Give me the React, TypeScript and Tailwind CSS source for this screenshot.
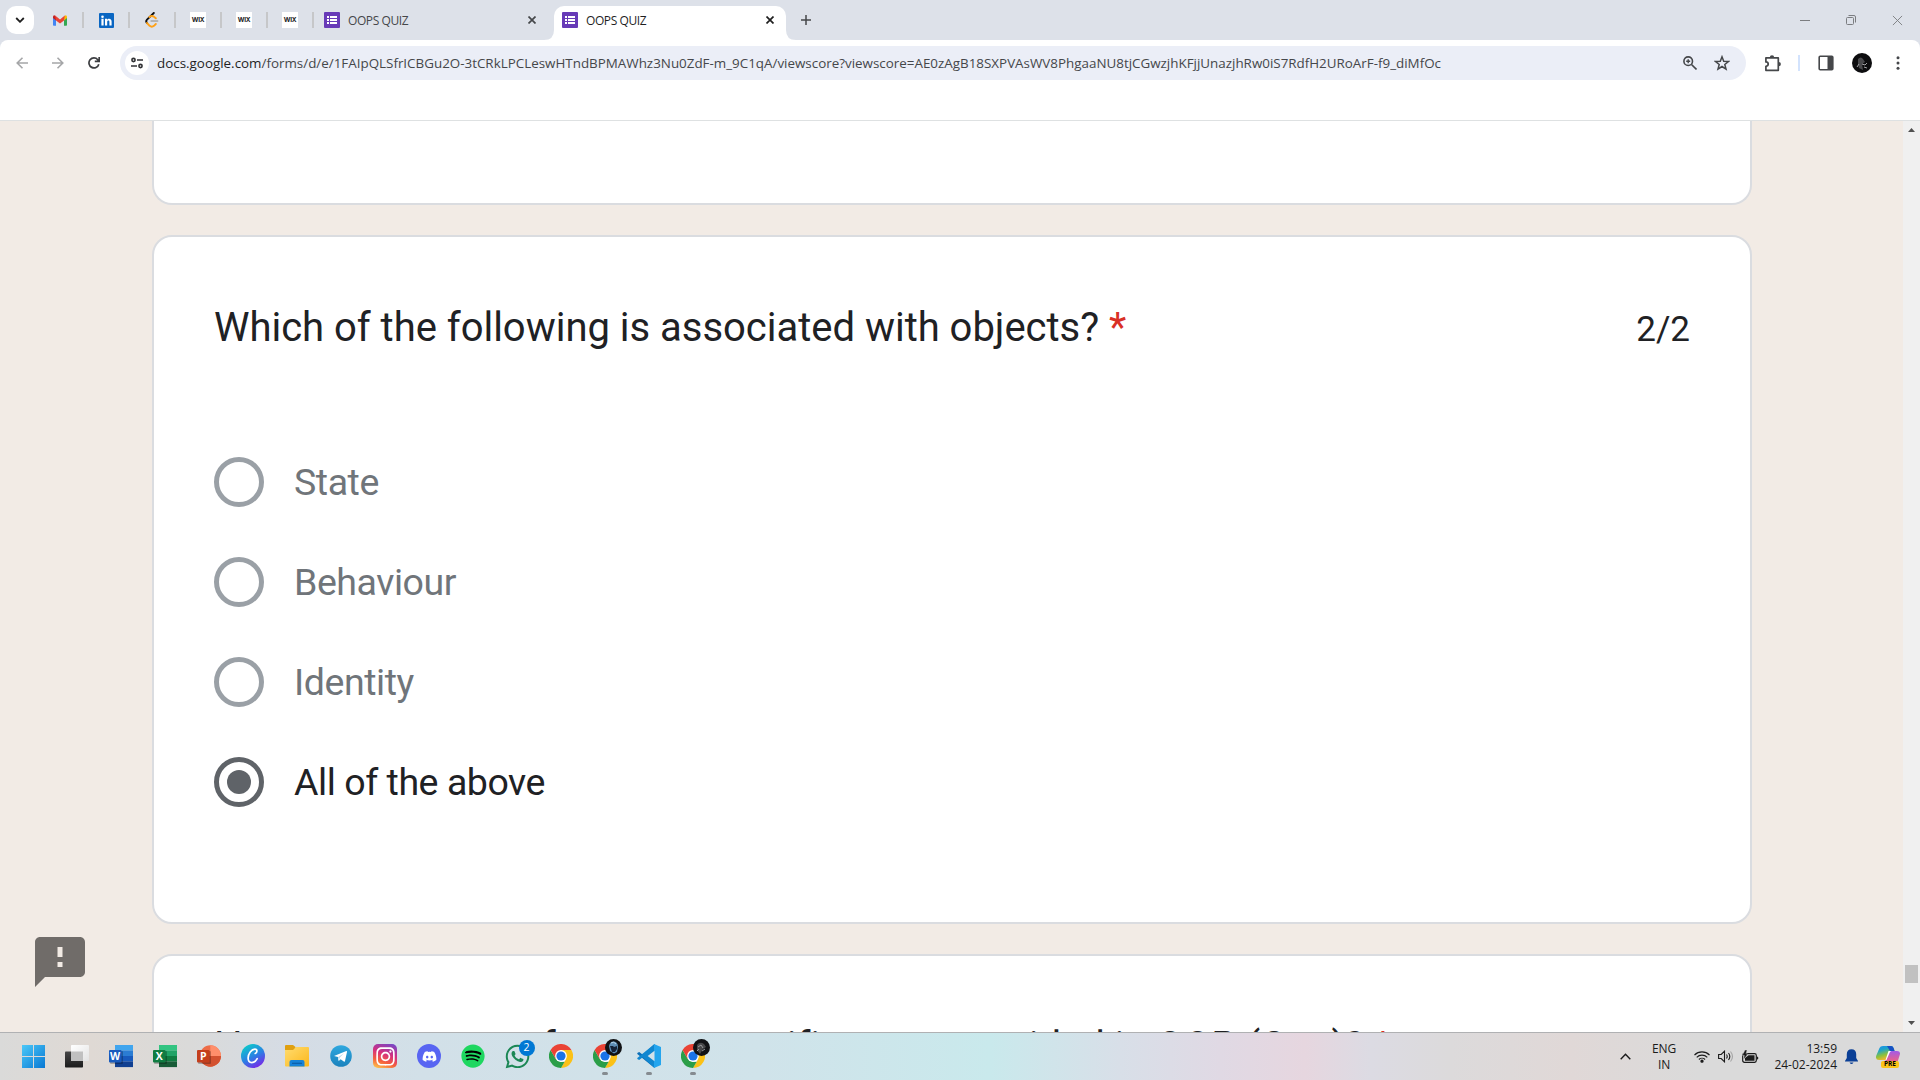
import React from "react";
import { FaDiscord, FaInstagram, FaSpotify, FaWhatsapp } from "react-icons/fa";
import { MdFeedback } from "react-icons/md";

const ui = "font-['Open_Sans','Noto_Sans',sans-serif]";

/* ---------- favicons ---------- */

const Gmail = () => (
  <svg width="14" height="11" viewBox="0 0 14 11">
    <path d="M0 1.6V10q0 .7.8.7H3V4.2z" fill="#4285f4" />
    <path d="M14 1.6V10q0 .7-.8.7H11V4.2z" fill="#34a853" />
    <path d="M0 1.8V3l3 2.6V1.6L2.3.7Q.3-.6 0 1.8z" fill="#c5221f" />
    <path d="M14 1.8V3l-3 2.6V1.6l.7-.9q2-1.3 2.3 1.1z" fill="#fbbc04" />
    <path d="M2.2.6 7 4.4 11.8.6 11 5.6 7 8.6 3 5.6z" fill="#ea4335" />
  </svg>
);

const LinkedIn = () => (
  <svg width="15" height="15" viewBox="0 0 15 15">
    <rect width="15" height="15" rx="1" fill="#0a66c2" />
    <circle cx="3.5" cy="3.7" r="1.3" fill="#fff" />
    <path d="M2.4 5.8h2.2v6.8H2.4zM6 5.8h2.1v1c.9-1.6 4.5-1.8 4.5 1.8v4h-2.2V9c0-2-2.2-1.8-2.2 0v3.6H6z" fill="#fff" />
  </svg>
);

const LeetCode = () => (
  <svg width="14" height="16" viewBox="0 0 14 16" fill="none" strokeLinecap="round" strokeWidth="1.9">
    <path d="M8.8 1 2 7.6q-1.6 1.6 0 3.4" stroke="#111" />
    <path d="m2 11 2.6 2.8q2.2 1.8 4.4 0L10.8 12M4.4 5q2.6-1.9 4.6-.2l1.8 1.5" stroke="#ffa116" />
    <path d="M6.3 9h6.2" stroke="#b3b3b3" />
  </svg>
);

const Wix = () => (
  <span className="flex h-4 w-4 items-center justify-center bg-white font-['Inter',sans-serif] text-[6.5px] font-bold leading-none tracking-[-0.3px] text-[#222222]">
    WIX
  </span>
);

const FormsIcon = () => (
  <svg width="16" height="16" viewBox="0 0 16 16" className="shrink-0">
    <rect width="16" height="16" rx="1" fill="#673ab7" />
    <path d="M3 4h2v2H3zM3 7h2v2H3zM3 10h2v2H3zM6 4h7v2H6zM6 7h7v2H6zM6 10h7v2H6z" fill="#fff" />
  </svg>
);

const CloseX = ({ color }: { color: string }) => (
  <svg width="8" height="8" viewBox="0 0 8 8" stroke={color} strokeWidth="1.7">
    <path d="m.5.5 7 7M7.5.5l-7 7" />
  </svg>
);

const PinnedTab = ({ children }: { children: React.ReactNode }) => (
  <div className="flex h-4 w-[46px] items-center justify-center border-r-2 border-[#c6c7c9]">{children}</div>
);

const TabStrip = () => (
  <div className="flex h-10 shrink-0 items-center bg-[#dde1e9] pl-1.5">
    <button className="flex h-7 w-7 items-center justify-center rounded-[10px] bg-white">
      <svg width="10" height="6" viewBox="0 0 10 6" fill="none" stroke="#1f1f1f" strokeWidth="1.8">
        <path d="m1.2 1 3.8 3.8L8.8 1" />
      </svg>
    </button>
    <div className="ml-1 flex">
      <PinnedTab><Gmail /></PinnedTab>
      <PinnedTab><LinkedIn /></PinnedTab>
      <PinnedTab><LeetCode /></PinnedTab>
      <PinnedTab><Wix /></PinnedTab>
      <PinnedTab><Wix /></PinnedTab>
      <PinnedTab><Wix /></PinnedTab>
    </div>
    <div className="flex h-10 w-[240px] items-center pl-[10px] pr-[18px]">
      <FormsIcon />
      <span className={`${ui} ml-2 flex-1 pt-px text-[12px] tracking-[-0.4px] text-[#45474a]`}>OOPS QUIZ</span>
      <CloseX color="#45474a" />
    </div>
    <div className="relative flex h-[34px] w-[232px] items-center self-end rounded-t-[10px] bg-white pb-1.5 pl-2 pr-3">
      <svg className="absolute -left-[10px] bottom-0" width="10" height="10"><path d="M10 0v10H0Q10 10 10 0z" fill="#fff" /></svg>
      <svg className="absolute -right-[10px] bottom-0" width="10" height="10"><path d="M0 0v10h10Q0 10 0 0z" fill="#fff" /></svg>
      <FormsIcon />
      <span className={`${ui} ml-2 flex-1 pt-px text-[12px] tracking-[-0.4px] text-[#1f1f1f]`}>OOPS QUIZ</span>
      <CloseX color="#1f1f1f" />
    </div>
    <svg className="ml-[15px]" width="10" height="10" stroke="#45474a" strokeWidth="1.5"><path d="M0 5h10M5 0v10" /></svg>
    <div className="ml-auto flex items-center gap-[36px] pr-[17px]">
      <svg width="10" height="11" stroke="#7b7d80"><path d="M0 5.5h10" /></svg>
      <svg width="10" height="10" viewBox="0 0 10 10" fill="none" stroke="#7b7d80"><rect x=".5" y="2.5" width="7" height="7" rx="1" /><path d="M2.5.5H8q1.5 0 1.5 1.5v5.500" /></svg>
      <svg width="11" height="11" viewBox="0 0 12 11" stroke="#7b7d80"><path d="m1 .5 10 10M11 .5l-10 10" /></svg>
    </div>
  </div>
);

const Avatar = () => (
  <svg width="20" height="20" viewBox="0 0 20 20">
    <circle cx="10" cy="10" r="10" fill="#0d0d0f" />
    <path d="M6 6q3-3 5 0l2 3-3 2 1 6-4-2-1-4z" fill="#4a4a4d" />
    <path d="m10 11 3 1 2-2M12 14l3 1M5 14l2-3" stroke="#a5a5a8" fill="none" />
  </svg>
);

const Toolbar = () => (
  <div className="h-20 shrink-0 bg-[#dde1e9]">
    <div className="flex h-20 items-start rounded-t-[8px] bg-white pt-1.5">
      <div className="flex h-[34px] w-[120px] shrink-0 items-center pl-4">
        <svg width="12" height="12" viewBox="0 0 12 12" fill="none" stroke="#a5a6a8" strokeWidth="1.6"><path d="M12 6H1.200M6.500.7 1.200 6l5.300 5.300" /></svg>
        <svg className="ml-6" width="12" height="12" viewBox="0 0 12 12" fill="none" stroke="#a5a6a8" strokeWidth="1.600"><path d="M0 6h10.800M5.500.7 10.800 6l-5.300 5.300" /></svg>
        <svg className="ml-6" width="12" height="12" viewBox="0 0 12 12" fill="none" stroke="#3c3e41" strokeWidth="1.700"><path d="M10.800 7.200A5 5 0 1 1 9.800 2.700L11 4M11.200 0v4.400H6.800" /></svg>
      </div>
      <div className="flex h-[34px] w-[1626px] shrink-0 items-center rounded-full bg-[#ebeef7] pl-[5px] pr-4">
        <span className="flex h-6 w-6 shrink-0 items-center justify-center rounded-full bg-white">
          <svg width="12" height="12" viewBox="0 0 12 12" fill="none" stroke="#303134" strokeWidth="1.600"><circle cx="2.500" cy="3" r="1.600" /><path d="M6 3h6M0 9h6" /><circle cx="9.500" cy="9" r="1.600" /></svg>
        </span>
        <span className={`${ui} ml-2 flex-1 whitespace-nowrap pt-px text-[13.4px] text-[#45474a]`}>
          <span className="text-[#1f1f1f]">docs.google.com</span>/forms/d/e/1FAIpQLSfrICBGu2O-3tCRkLPCLeswHTndBPMAWhz3Nu0ZdF-m_9C1qA/viewscore?viewscore=AE0zAgB18SXPVAsWV8PhgaaNU8tjCGwzjhKFjjUnazjhRw0iS7RdfH2URoArF-f9_diMfOc
        </span>
        <svg width="14" height="14" viewBox="0 0 14 14" fill="none" stroke="#45474a" strokeWidth="1.600"><circle cx="5.200" cy="5.200" r="4.300" /><path d="m8.500 8.500 5 5" /><path d="M5.200 3.200v4M3.200 5.200h4" strokeWidth="1.400" /></svg>
        <svg className="ml-[17px]" width="16" height="16" viewBox="0 0 16 16" fill="none" stroke="#45474a" strokeWidth="1.500"><path d="m8 1.800 1.700 4.400 4.700.3-3.600 3 1.200 4.600-4-2.600-4 2.600 1.200-4.600-3.600-3 4.700-.3z" /></svg>
      </div>
      <div className="flex h-[34px] flex-1 items-center pl-[18px]">
        <svg width="18" height="17" viewBox="0 0 18 17" fill="none" stroke="#45474a" strokeWidth="1.700"><path d="M1.900 2.900h12.400v12.400H1.900v-4q2.300 0 2.300-2.200T1.900 6.900z" strokeLinejoin="round" /><path d="M5.800 2.500a2.200 2.200 0 0 1 4.400 0zM14.700 6.900a2.200 2.200 0 0 1 0 4.400z" fill="#45474a" stroke="none" /></svg>
        <span className="ml-4 h-4 w-0.5 bg-[#d3e3fd]" />
        <svg className="ml-[18px]" width="16" height="16" viewBox="0 0 16 16"><rect x="1.200" y="1.200" width="13.600" height="13.600" rx="1" fill="none" stroke="#45474a" strokeWidth="1.600" /><path d="M9.500 1H15v14H9.500z" fill="#45474a" /></svg>
        <span className="ml-[18px]"><Avatar /></span>
        <svg className="ml-6" width="4" height="14" fill="#45474a"><circle cx="2" cy="1.700" r="1.500" /><circle cx="2" cy="7" r="1.500" /><circle cx="2" cy="12.300" r="1.500" /></svg>
      </div>
    </div>
  </div>
);

/* ---------- form ---------- */

const options = [
  { label: "State", selected: false },
  { label: "Behaviour", selected: false },
  { label: "Identity", selected: false },
  { label: "All of the above", selected: true },
];

const Question = ({ text, score }: { text: string; score?: string }) => (
  <div className="flex h-[60px] items-baseline justify-between whitespace-nowrap text-[40px] leading-[60px] tracking-[-0.02px] text-[#202124]">
    <span>
      {text}
      <span className="ml-[10px] text-[#d93025]">*</span>
    </span>
    {score && <span className="text-[35px]">{score}</span>}
  </div>
);

const FormPage = () => (
  <div className="relative flex-1 overflow-hidden bg-[#f2ebe5] pl-[152px] font-[Roboto,sans-serif]">
    <div className="flex w-[1600px] flex-col gap-[30px]">
      <div className="h-[84px] rounded-b-[20px] border-2 border-t-0 border-[#dadce0] bg-white" />
      <div className="h-[689px] rounded-[20px] border-2 border-[#dadce0] bg-white px-[60px] pt-[61px]">
        <Question text="Which of the following is associated with objects?" score="2/2" />
        <div className="mt-[99px] flex flex-col gap-[50px]">
          {options.map((o) => (
            <div key={o.label} className="flex h-[50px] items-center gap-[30px]">
              <span className={o.selected ? "flex h-[50px] w-[50px] items-center justify-center rounded-full border-[5px] border-[#5f6368]" : "h-[50px] w-[50px] rounded-full border-[5px] border-[#9aa0a6]"}>
                {o.selected && <span className="h-[24px] w-[24px] rounded-full bg-[#5f6368]" />}
              </span>
              <span className={o.selected ? "text-[37.5px] leading-[50px] tracking-[-0.45px] text-[#202124]" : "text-[37.5px] leading-[50px] tracking-[-0.45px] text-[#70757a]"}>{o.label}</span>
            </div>
          ))}
        </div>
      </div>
      <div className="h-[400px] rounded-[20px] border-2 border-[#dadce0] bg-white px-[60px] pt-[61px]">
        <Question text="How many types of access specifiers are provided in OOP (C++)?" />
      </div>
    </div>
    <MdFeedback className="absolute bottom-[40px] left-[30px] h-[60px] w-[60px] text-[#706c69]" />
  </div>
);

const ScrollBar = () => (
  <div className="flex w-[17px] shrink-0 flex-col items-center bg-[#f0f0f0]">
    <svg className="mt-[7px]" width="7" height="4"><path d="M0 4 3.500 0 7 4z" fill="#505050" /></svg>
    <div className="mt-[833px] h-[18px] w-[13px] bg-[#c1c1c1]" />
    <svg className="mt-[38px]" width="7" height="4"><path d="M0 0h7L3.500 4z" fill="#505050" /></svg>
  </div>
);

/* ---------- taskbar ---------- */

const Windows = () => (
  <svg width="23" height="23" viewBox="0 0 23 23">
    <defs><linearGradient id="win" x1="0" y1="0" x2="1" y2="1" gradientUnits="objectBoundingBox"><stop stopColor="#4cc8f8" /><stop offset="1" stopColor="#0878d3" /></linearGradient></defs>
    <path d="M0 0h11v11H0zM12 0h11v11H12zM0 12h11v11H0zM12 12h11v11H12z" fill="url(#win)" />
  </svg>
);

const TaskView = () => (
  <svg width="24" height="23" viewBox="0 0 24 23">
    <defs>
      <linearGradient id="tv1" x2="0" y2="1"><stop stopColor="#454545" /><stop offset="1" stopColor="#1c1c1c" /></linearGradient>
      <linearGradient id="tv2" x2="1" y2="1"><stop stopColor="#fff" /><stop offset="1" stopColor="#e3e3e3" /></linearGradient>
    </defs>
    <rect y="6.500" width="18" height="16" rx=".8" fill="url(#tv1)" />
    <rect x="6" y="0" width="18" height="16" rx=".8" fill="url(#tv2)" />
    <path d="M6 6.500h12V16H6z" fill="#c0c0c0" />
  </svg>
);

const OfficeIcon = ({ letter, bands, badge, round }: { letter: string; bands: string[]; badge: string; round?: boolean }) => (
  <svg width="24" height="24" viewBox="0 0 24 24">
    {round ? (
      <>
        <circle cx="13.300" cy="12" r="10.700" fill={bands[0]} />
        <path d="M13.300 1.300A10.700 10.700 0 0 1 24 12H13.300z" fill={bands[1]} />
        <path d="M2.600 12H24a10.700 10.700 0 0 1-21.400 0z" fill={bands[2]} />
      </>
    ) : (
      bands.map((c, i) => <rect key={c} x="6" y={1 + i * 5.500} width="18" height="5.600" fill={c} />)
    )}
    <rect x="1" y="7" width="13" height="13" rx="1" fill="#000" opacity=".25" />
    <rect x="0" y="6" width="12.500" height="12.500" rx="1" fill={badge} />
    <text x="6.200" y="16" textAnchor="middle" fontFamily="Open Sans, sans-serif" fontWeight="700" fontSize="10.500" fill="#fff">{letter}</text>
  </svg>
);

const Canva = () => (
  <svg width="24" height="24" viewBox="0 0 24 24">
    <defs><linearGradient id="cv" x1=".2" y1=".1" x2=".7" y2="1"><stop stopColor="#0fc4cc" /><stop offset=".5" stopColor="#2b80e4" /><stop offset="1" stopColor="#7a25e8" /></linearGradient></defs>
    <circle cx="12" cy="12" r="12" fill="url(#cv)" />
    <path d="M14.200 9.500c2.300-.8 2.400-4.400-.3-4.400-3.400 0-6.800 4.700-6.800 9 0 2.700 1.300 4.600 3.700 4.600 2.200 0 4-1.500 5.400-4" fill="none" stroke="#fff" strokeWidth="1.700" strokeLinecap="round" />
  </svg>
);

const Folder = () => (
  <svg width="24" height="22" viewBox="0 0 24 22">
    <defs><linearGradient id="fo" x2="1" y2="1"><stop stopColor="#ffdc70" /><stop offset="1" stopColor="#fcb71a" /></linearGradient></defs>
    <path d="M0 1q0-1 1-1h7l2.500 2v3H0z" fill="#e0a010" />
    <path d="M0 5h8l3-3h12q1 0 1 1v17.500q0 1-1 1H1q-1 0-1-1z" fill="url(#fo)" />
    <path d="M4.500 21.500V17q0-2 2-2h11q2 0 2 2v4.500z" fill="#1683d8" />
    <path d="M7 18.300h10" stroke="#0c5ea8" strokeWidth="1.200" />
  </svg>
);

const Telegram = () => (
  <svg width="22" height="22" viewBox="0 0 22 22">
    <defs><linearGradient id="tg" x2="0" y2="1"><stop stopColor="#2fa8df" /><stop offset="1" stopColor="#1b82bd" /></linearGradient></defs>
    <circle cx="11" cy="11" r="10.800" fill="url(#tg)" />
    <path d="m4 10.900 12.300-4.900q.9-.2.700.9l-2 9.200q-.3 1-1.200.4l-3.200-2.300-1.600 1.500q-.5.300-.6-.3l-.5-3.300-3.800-1.100z" fill="#fff" />
    <path d="m8 12.200 6-4-4.500 4.600-.3 2.700z" fill="#b6d6ea" />
  </svg>
);

const Instagram = () => (
  <span className="flex h-6 w-6 items-center justify-center rounded-[5px] bg-[linear-gradient(20deg,#fdc04e_5%,#f5603c_30%,#d42f7f_58%,#6a4bd0_100%)]">
    <FaInstagram className="h-[21px] w-[21px] text-white" />
  </span>
);

const Discord = () => (
  <span className="flex h-6 w-6 items-center justify-center rounded-full bg-[#5865f2]">
    <FaDiscord className="h-[15px] w-[15px] text-white" />
  </span>
);

const Spotify = () => (
  <span className="relative flex h-6 w-6 items-center justify-center">
    <span className="absolute inset-[3px] rounded-full bg-black" />
    <FaSpotify className="relative h-6 w-6 text-[#1ed760]" />
  </span>
);

const WhatsApp = () => (
  <span className="relative">
    <FaWhatsapp className="h-[27px] w-[27px] text-[#1b8755]" />
    <span className={`${ui} absolute -right-[4px] -top-[3px] flex h-4 w-4 items-center justify-center rounded-full bg-[#0078d4] text-[10.500px] leading-none text-white`}>2</span>
  </span>
);

const Chrome = ({ badge }: { badge?: "blue" | "dark" }) => (
  <span className="relative">
    <svg width="24" height="24" viewBox="0 0 24 24">
      <path d="M12 12 1.600 6A12 12 0 0 1 22.400 6z" fill="#ea4335" />
      <path d="M12 12V6h10.400A12 12 0 0 1 12 24l5.200-9z" fill="#fbc116" />
      <path d="M1.600 6l5.200 9L12 18h3.500L12 24A12 12 0 0 1 1.600 6z" fill="#2b9e48" />
      <path d="M1.600 6h20.800H12L6.800 15z" fill="#ea4335" />
      <circle cx="12" cy="12" r="5.900" fill="#fff" />
      <circle cx="12" cy="12" r="4.600" fill="#1a73e8" />
    </svg>
    {badge && (
      <svg className="absolute -right-[5px] -top-[5px]" width="17" height="17" viewBox="0 0 17 17">
        <circle cx="8.500" cy="8.500" r="8.500" fill="#111215" />
        {badge === "blue" ? (
          <>
            <path d="M4 7Q5 2 9 2.500T13 8l-1 5-3 1.500L5 12z" fill="#5e8db5" />
            <path d="M5 7h3l1 1 3-1v3l-2 3H7z" fill="#152238" />
            <path d="M6 4q3-2 5 1" stroke="#b9d6ea" fill="none" />
          </>
        ) : (
          <>
            <path d="M4 6q3-4 7-1l2 3-3 2-3 5-3-4z" fill="#48484a" />
            <path d="m5 8 3-2 2 3M9 12l3-2M4 12l2-2" stroke="#98989b" fill="none" />
          </>
        )}
      </svg>
    )}
  </span>
);

const VSCode = () => (
  <svg width="24" height="24" viewBox="0 0 24 24">
    <path d="M17.500 0 5.800 10.700 2.200 8 .3 9v1l17.200 14z" fill="#0b6fb8" />
    <path d="M17.500 24 5.800 13.300 2.200 16 .3 15v-1L17.500 0z" fill="#1187d0" />
    <path d="m17 0 7 3v18l-7 3z" fill="#24a5ee" />
    <path d="M17.500 6.800v10.400L10.700 12z" fill="#d3e1e9" />
  </svg>
);

const apps: { icon: React.ReactNode; running?: boolean }[] = [
  { icon: <Windows /> },
  { icon: <TaskView /> },
  { icon: <OfficeIcon letter="W" badge="#185abd" bands={["#41a5ee", "#2b7cd3", "#185abd", "#103f91"]} /> },
  { icon: <OfficeIcon letter="X" badge="#107c41" bands={["#33c481", "#21a366", "#107c41", "#185c37"]} /> },
  { icon: <OfficeIcon letter="P" badge="#c43e1c" bands={["#ed6c47", "#ff8f6b", "#d35230"]} round /> },
  { icon: <Canva /> },
  { icon: <Folder /> },
  { icon: <Telegram /> },
  { icon: <Instagram /> },
  { icon: <Discord /> },
  { icon: <Spotify /> },
  { icon: <WhatsApp /> },
  { icon: <Chrome /> },
  { icon: <Chrome badge="blue" />, running: true },
  { icon: <VSCode />, running: true },
  { icon: <Chrome badge="dark" />, running: true },
];

const Tray = () => (
  <div className={`${ui} ml-auto flex h-full items-center text-[12px] leading-4 text-[#1b1b1b]`}>
    <svg width="11" height="7" viewBox="0 0 11 7" fill="none" stroke="#1b1b1b" strokeWidth="1.400"><path d="m.7 6.200 4.800-4.900 4.800 4.900" /></svg>
    <div className="ml-[20px] w-[26px] text-center tracking-[-0.2px]">
      <div>ENG</div>
      <div>IN</div>
    </div>
    <svg className="ml-[17px]" width="16" height="13" viewBox="0 0 16 13" fill="none" stroke="#1b1b1b" strokeWidth="1.100">
      <path d="M.5 5a10.600 10.600 0 0 1 15 0M2.700 7.300a7.500 7.500 0 0 1 10.600 0M4.900 9.500a4.400 4.400 0 0 1 6.200 0" />
      <circle cx="8" cy="11.200" r="1.100" fill="#1b1b1b" />
    </svg>
    <svg className="ml-2" width="16" height="13" viewBox="0 0 16 13" fill="none" stroke="#1b1b1b" strokeWidth="1.100">
      <path d="M.6 4.500h2.600L6.500 1.200v10.600L3.200 8.500H.6zM8.500 4.500q1.400 2 0 4" />
      <path d="M10.500 3q2.600 3.500 0 7" />
      <path d="M12.500 1.500q4 5 0 10" stroke="#a5a5a5" />
    </svg>
    <svg className="ml-2" width="17" height="14" viewBox="0 0 17 14">
      <rect x=".7" y="3.700" width="13.600" height="8.600" rx="1.700" fill="none" stroke="#1b1b1b" strokeWidth="1.200" />
      <path d="M15 6.500q1.300 0 1.300 1.500T15 9.500z" fill="#1b1b1b" />
      <path d="M3 10.800V8L6.500 5.300H12.500v5.500z" fill="#1b1b1b" />
      <path d="M3 0 .3 5.500h2L1.500 9.500 6 4H4L5 0z" fill="#1b1b1b" stroke="#dadada" strokeWidth=".4" />
    </svg>
    <div className="w-[78px] text-right">
      <div>13:59</div>
      <div>24-02-2024</div>
    </div>
    <svg className="ml-[8px]" width="13" height="16" viewBox="0 0 13 16" fill="#0a3f96"><path d="M6.500.3Q11 .5 11.200 5v4L13 12v.6H0V12l1.800-3V5Q2 .5 6.500.3zM4.500 13.500h4q-2 3-4 0z" /></svg>
    <div className="relative ml-[18px] mr-[20px] h-[24px] w-[24px]">
      <svg width="24" height="20" viewBox="0 0 24 20">
        <defs>
          <linearGradient id="cp1" x2=".4" y2="1"><stop stopColor="#1a8df0" /><stop offset=".35" stopColor="#1fa5c8" /><stop offset=".7" stopColor="#8fc13a" /><stop offset="1" stopColor="#f5b72e" /></linearGradient>
          <linearGradient id="cp2" x2="0" y2="1"><stop stopColor="#a25be8" /><stop offset="1" stopColor="#f0627f" /></linearGradient>
        </defs>
        <path d="M7 1h8q2 0 2.600 2l1 3h-4l-4 9H3q-4 0-2.700-4.500L3.500 3Q4.300 1 7 1z" fill="url(#cp1)" />
        <path d="M11 1h4q2 0 2.600 2l1 3H14z" fill="#1651c4" />
        <path d="M14 6h7q4 0 2.700 4L22 15.500Q21.500 17 19.500 17H9z" fill="url(#cp2)" />
        <path d="m10.500 15 3-7q.5-1.500 2-2h-3L9.500 15z" fill="#fff" />
      </svg>
      <span className="absolute left-[5px] top-[16px] flex h-[7px] w-[18px] items-center justify-center rounded-[2px] bg-[#fcc419] font-['Open_Sans',sans-serif] text-[6.500px] font-bold leading-none text-black">PRE</span>
    </div>
  </div>
);

const Taskbar = () => (
  <div className="flex h-12 shrink-0 items-center border-t border-[#b0b1b3] bg-[linear-gradient(90deg,#dadad9_0px,#dfd9d4_90px,#dadad9_190px,#d5dce5_290px,#d2e0e8_420px,#d0e3ea_760px,#c9e9ec_990px,#d8dfe8_1120px,#e0d9e4_1220px,#e6d6df_1305px,#dcdbe3_1370px,#dcdadb_1450px,#e0d8d7_1570px,#dadada_1700px,#dadada_1920px)] pl-[11px]">
    {apps.map((a, i) => (
      <div key={i} className="relative flex h-full w-11 items-center justify-center pb-px">
        {a.icon}
        {a.running && <span className="absolute bottom-[5px] left-[19px] h-[3px] w-[6px] rounded-full bg-[#858b90]" />}
      </div>
    ))}
    <Tray />
  </div>
);

export default function App() {
  return (
    <div className="flex h-[1080px] w-[1920px] flex-col overflow-hidden bg-white">
      <TabStrip />
      <Toolbar />
      <div className="flex min-h-0 flex-1 border-t border-[#dee1e2]">
        <FormPage />
        <ScrollBar />
      </div>
      <Taskbar />
    </div>
  );
}
